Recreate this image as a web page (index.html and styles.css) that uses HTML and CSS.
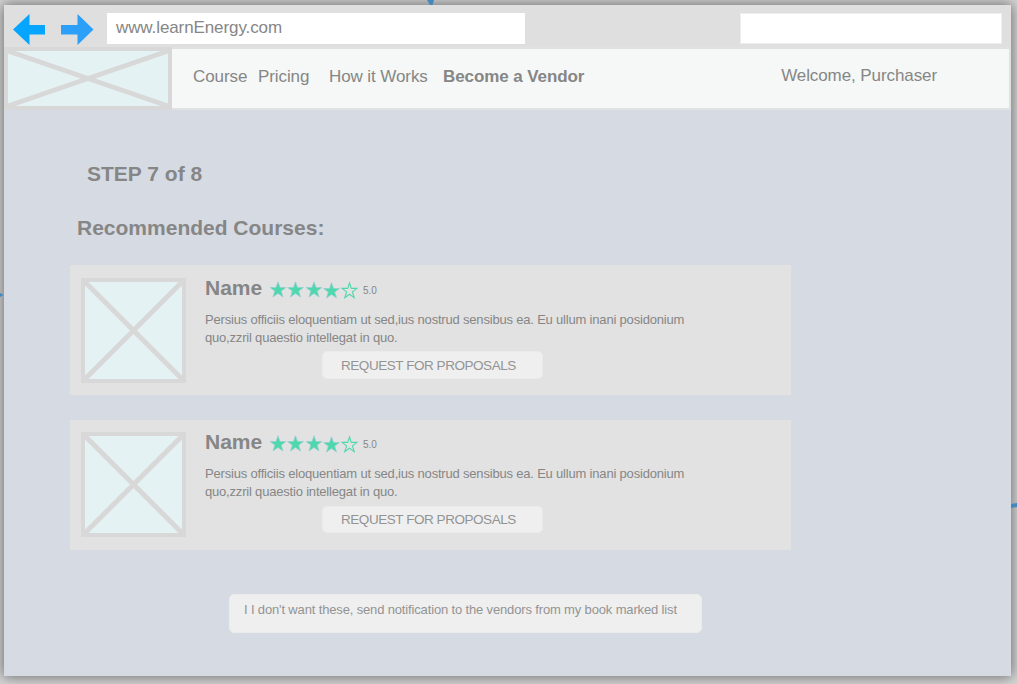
FILE: index.html
```html
<!DOCTYPE html>
<html lang="en">
<head>
<meta charset="utf-8">
<title>learnEnergy</title>
<link rel="stylesheet" href="styles.css">
</head>
<body>
<svg class="connectors" width="1017" height="684" viewBox="0 0 1017 684" aria-hidden="true">
  <path d="M427 0H434L432.500 5H430Z"/>
  <path d="M0 293L3.500 295L0 297Z"/>
  <path d="M1011 504L1017 503V507L1011 508Z"/>
</svg>
<svg width="0" height="0" class="defs" aria-hidden="true">
  <symbol id="rating" viewBox="0 0 90 20">
    <g class="star-full">
      <path id="s" d="M9 1.700L11 7.500H17L12.200 11.100L14 17L9 13.400L4 17L5.800 11.100L1 7.500H7Z"/>
      <use href="#s" x="17.500"/>
      <use href="#s" x="36"/>
      <use href="#s" x="53.500" y="1"/>
    </g>
    <path class="star-empty" d="M80.500 3L82.300 8.400H87.900L83.400 11.900L85.200 17.600L80.500 14.200L75.800 17.600L77.600 11.900L73.100 8.400H78.700Z"/>
  </symbol>
  <symbol id="photo" viewBox="0 0 105 105">
    <rect class="ph-fill" x="2" y="2" width="101" height="101"/>
    <path class="ph-line" d="M3 3L102 102M102 3L3 102"/>
    <rect class="ph-frame" x="2" y="2" width="101" height="101"/>
  </symbol>
</svg>
<div class="window">
  <div class="toolbar">
    <svg class="arrows" width="82" height="34" viewBox="0 0 82 34">
      <path fill="#06a5ff" d="M1 16.500L17.500 1V12H33V21.500H17.500V32Z"/>
      <path fill="#2c9ff8" d="M81.500 16.500L65.500 1V12H49V21.500H65.500V32Z"/>
    </svg>
    <div class="address">www.learnEnergy.com</div>
    <div class="search"></div>
  </div>
  <header class="header">
    <svg class="logo" width="168" height="63" viewBox="0 0 168 63">
      <rect class="ph-fill" x="2" y="2" width="164" height="59"/>
      <path class="ph-line" d="M4 4L164 59M164 4L4 59"/>
      <rect class="ph-frame" x="2" y="2" width="164" height="59"/>
    </svg>
    <nav class="nav">
      <a class="course">Course</a><a class="pricing">Pricing</a><a class="how">How it Works</a><a class="vendor">Become a Vendor</a>
      <span class="welcome">Welcome, Purchaser</span>
    </nav>
  </header>
  <main class="main">
    <h1 class="step">STEP 7 of 8</h1>
    <h2 class="title">Recommended Courses:</h2>
    <section class="cards">
      <article class="card">
        <svg class="photo"><use href="#photo"/></svg>
        <div class="info">
          <div class="name-row"><h3 class="name">Name</h3><svg class="rating"><use href="#rating"/></svg><span class="score">5.0</span></div>
          <p class="desc"><span class="line first">Persius officiis eloquentiam ut sed,ius nostrud sensibus ea. Eu ullum inani posidonium</span><span class="line second">quo,zzril quaestio intellegat in quo.</span></p>
          <button class="request"><span class="request-label">REQUEST FOR PROPOSALS</span></button>
        </div>
      </article>
      <article class="card lower">
        <svg class="photo"><use href="#photo"/></svg>
        <div class="info">
          <div class="name-row"><h3 class="name">Name</h3><svg class="rating"><use href="#rating"/></svg><span class="score">5.0</span></div>
          <p class="desc"><span class="line first">Persius officiis eloquentiam ut sed,ius nostrud sensibus ea. Eu ullum inani posidonium</span><span class="line second">quo,zzril quaestio intellegat in quo.</span></p>
          <button class="request"><span class="request-label">REQUEST FOR PROPOSALS</span></button>
        </div>
      </article>
    </section>
    <button class="decline"><span class="decline-label">I I don't want these, send notification to the vendors from my book marked list</span></button>
  </main>
</div>
</body>
</html>
```

FILE: styles.css
```css
* { box-sizing: border-box; }
body {
  margin: 0;
  width: 1017px;
  height: 684px;
  padding: 5px 6px 8px 4px;
  overflow: hidden;
  background: #d6d6d6;
  font-family: "Liberation Sans", Arial, sans-serif;
  color: #868686;
}
h1, h2, h3, p { margin: 0; }
.defs { position: absolute; }
.connectors { position: absolute; left: 0; top: 0; z-index: 2; fill: #4588bb; }
.window {
  width: 1007px;
  height: 671px;
  background: #d6dae2;
  box-shadow: 0 0 13px 1px rgba(0, 0, 0, .5);
}
.toolbar { display: flex; height: 42px; background: #dfdfdf; padding: 8px 9px 0 8px; }
.arrows { flex: none; }
.address {
  width: 418px;
  height: 31px;
  margin-left: 13px;
  padding-left: 9px;
  background: #fff;
  font-size: 17px;
  letter-spacing: -.1px;
  line-height: 29px;
  white-space: nowrap;
}
.search { width: 262px; height: 31px; margin-left: auto; background: #fff; border: 1px solid #eee; }
.header { display: flex; height: 63px; }
.logo { flex: none; display: block; }
.ph-fill { fill: #e5f2f4; }
.ph-line { stroke: #d8d8d8; stroke-width: 5; fill: none; }
.ph-frame { stroke: #d8d8d8; stroke-width: 4; fill: none; }
.nav {
  flex: 1;
  display: flex;
  background: #f5f8f7;
  border: solid #e0e1e1;
  border-width: 2px 2px 2px 0;
  padding: 18px 72px 0 21px;
  font-size: 17px;
  letter-spacing: -.09px;
  line-height: 20px;
  white-space: nowrap;
}
.course { width: 54px; }
.pricing { width: 51px; margin-left: 11px; }
.how { width: 98px; margin-left: 20px; }
.vendor { margin-left: 16px; font-weight: bold; }
.welcome { margin-left: auto; margin-top: -1px; }
.main { padding: 52px 0 0 66px; }
.step, .title { font-size: 21px; line-height: 24px; }
.step { padding-left: 17px; }
.title { margin-top: 30px; padding-left: 7px; }
.cards { display: flex; flex-direction: column; gap: 25px; margin-top: 25px; width: 721px; }
.card {
  display: flex;
  gap: 19px;
  height: 130px;
  padding: 13px 0 0 11px;
  background: #e2e2e2;
}
.card.lower { height: 129.5px; padding-top: 12px; }
.photo { flex: none; width: 105px; height: 105px; }
.info { width: 500px; margin-top: -2px; }
.name-row { display: flex; height: 24px; }
.name { width: 64px; font-size: 21px; line-height: 24px; }
.rating { width: 90px; height: 20px; margin-top: 4px; }
.star-full { fill: #4dd8ad; stroke: #9acbd2; stroke-width: .7; }
.star-empty { fill: none; stroke: #4dd8ad; stroke-width: 1.1; }
.score { font-size: 10px; letter-spacing: -.1px; line-height: 12px; margin: 9px 0 0 4px; }
.desc { margin-top: 11px; font-size: 13px; letter-spacing: -.19px; line-height: 18px; white-space: nowrap; }
.line { display: block; }
.request, .decline {
  display: block;
  border: 1px solid #ebebeb;
  border-radius: 5px;
  background: #efefef;
  color: #939393;
  font-family: inherit;
  text-align: left;
  white-space: nowrap;
}
.request { width: 221px; height: 28px; margin: 4px 0 0 117px; padding: 0 0 0 18px; font-size: 13.5px; letter-spacing: -.45px; }
.lower .request { height: 27px; margin-top: 5px; }
.decline { width: 473px; height: 39px; margin: 44px 0 0 159px; padding: 0 0 7px 14px; font-size: 13px; letter-spacing: -.15px; }
```
